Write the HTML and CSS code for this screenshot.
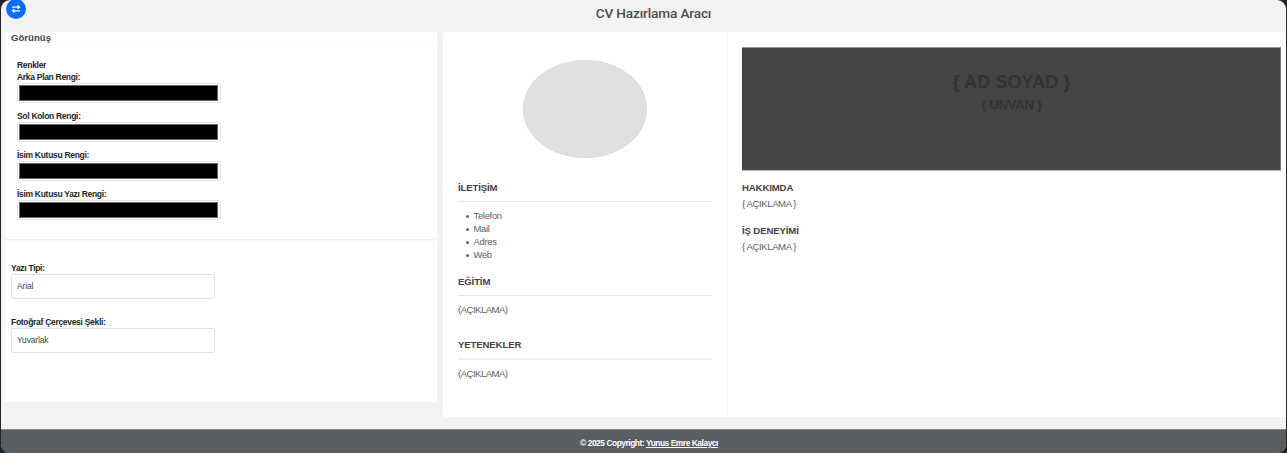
FILE: index.html
```html
<!DOCTYPE html>
<html lang="tr">
<head>
<meta charset="utf-8">
<title>CV Hazırlama Aracı</title>
<link rel="stylesheet" href="styles.css">
</head>
<body>
<div class="app">
  <header class="topbar">
    <h1 class="title">CV Hazırlama Aracı</h1>
    <button class="toggle" aria-label="Paneli değiştir">
      <svg width="10" height="8" viewBox="0 0 10 8" fill="none" stroke="#fff" stroke-width="1.2"><path d="M1 2.2H8.5M6.6 .5L8.5 2.2L6.6 3.9M9 5.8H1.5M3.4 4.1L1.5 5.8L3.4 7.5"/></svg>
    </button>
  </header>
  <main class="workspace">
    <aside class="settings">
      <h2 class="settings-title">Görünüş</h2>
      <section class="colors">
        <div class="label">Renkler</div>
        <div class="color-field"><div class="label">Arka Plan Rengi:</div><div class="swatch"><div class="swatch-fill"></div></div></div>
        <div class="color-field"><div class="label">Sol Kolon Rengi:</div><div class="swatch"><div class="swatch-fill"></div></div></div>
        <div class="color-field"><div class="label">İsim Kutusu Rengi:</div><div class="swatch"><div class="swatch-fill"></div></div></div>
        <div class="color-field"><div class="label">İsim Kutusu Yazı Rengi:</div><div class="swatch"><div class="swatch-fill"></div></div></div>
      </section>
      <section class="options">
        <div class="option"><div class="label">Yazı Tipi:</div><div class="select">Arial</div></div>
        <div class="option"><div class="label">Fotoğraf Çerçevesi Şekli:</div><div class="select">Yuvarlak</div></div>
      </section>
    </aside>
    <article class="cv">
      <div class="cv-side">
        <div class="photo"></div>
        <section class="contact">
          <h3 class="heading ruled">İLETİŞİM</h3>
          <ul class="list"><li>Telefon</li><li>Mail</li><li>Adres</li><li>Web</li></ul>
        </section>
        <section class="education">
          <h3 class="heading ruled">EĞİTİM</h3>
          <p class="text">(AÇIKLAMA)</p>
        </section>
        <section class="skills">
          <h3 class="heading ruled thick">YETENEKLER</h3>
          <p class="text">(AÇIKLAMA)</p>
        </section>
      </div>
      <div class="cv-main">
        <div class="namebox">
          <div class="name">{ AD SOYAD }</div>
          <div class="role">{ UNVAN }</div>
        </div>
        <section class="block">
          <h3 class="heading">HAKKIMDA</h3>
          <p class="text">{ AÇIKLAMA }</p>
        </section>
        <section class="block">
          <h3 class="heading">İŞ DENEYİMİ</h3>
          <p class="text">{ AÇIKLAMA }</p>
        </section>
      </div>
    </article>
  </main>
  <footer class="footer"><span class="copy">© 2025 Copyright: <a class="author">Yunus Emre Kalaycı</a></span></footer>
</div>
</body>
</html>
```
FILE: styles.css
```css
* { box-sizing: border-box; }
body { margin: 0; padding: 0 1px; height: 453px; background: #242326; font-family: "Liberation Sans", Arial, sans-serif; color: #212529; overflow: hidden; }
h1, h2, h3, p, ul { margin: 0; padding: 0; }
.app { height: 453px; display: flex; flex-direction: column; background: #f3f3f3; border-radius: 9px; overflow: hidden; }
.topbar { position: relative; height: 32px; flex: none; padding-left: 20px; text-align: center; }
.title { font: 500 13.6px/26px Roboto, sans-serif; letter-spacing: -.14px; color: #4c4c4c; white-space: nowrap; }
.toggle { position: absolute; left: 5px; top: -1px; width: 20px; height: 20px; padding: 0; border: 0; border-radius: 50%; background: #0d6efd; display: flex; align-items: center; justify-content: center; }
.workspace { height: 397px; flex: none; display: flex; align-items: flex-start; gap: 6px; padding-left: 4px; }
.settings { width: 432px; height: 370px; flex: none; background: #fff; }
.settings-title { height: 15px; padding-left: 6px; font: 700 9.6px/12px "Liberation Sans", Arial, sans-serif; letter-spacing: 0; color: #444; border-bottom: 1px solid #fcfcfc; }
.label { font-size: 8.5px; font-weight: 700; line-height: 12px; letter-spacing: -.3px; white-space: nowrap; }
.colors { height: 193px; padding: 12px 12px 0; border-bottom: 1px solid #eee; border-radius: 0 0 4px 4px; box-shadow: 0 1px 2px #f3f3f3; }
.color-field { height: 39px; }
.swatch { width: 204px; height: 20px; padding: 1px; border: 1px solid #e6e6e6; border-radius: 2px; }
.swatch-fill { height: 16px; margin-right: 1px; background: #000; border: 1px solid #666; }
.options { padding: 22px 6px 0; }
.option { height: 54px; }
.select { width: 204px; height: 25px; padding-left: 5px; border: 1px solid #e2e4e6; border-radius: 2px; font-size: 8.5px; line-height: 23px; letter-spacing: -.15px; color: #444; }
.cv { width: 843px; height: 385px; display: flex; flex: none; background: #fff; border-radius: 3px 0 0 3px; }
.cv-side { width: 285px; padding: 27.5px 15px 0; border-right: 1px solid #f8f8f8; }
.photo { width: 124px; height: 98.5px; margin: 0 auto 22px; background: #e0e0e0; border: 1px solid #dadada; border-radius: 50%; }
.heading { font-size: 9.6px; font-weight: 700; line-height: 15px; letter-spacing: -.13px; color: #444; }
.ruled { height: 22px; border-bottom: 1px solid #e7e7e7; }
.thick { height: 23px; border-bottom: 2px solid #f1f1f1; }
.contact { height: 94px; }
.education { height: 63px; }
.list { margin-top: 7px; padding-left: 15.5px; list-style: none; font-size: 9.4px; line-height: 13px; letter-spacing: -.28px; color: #5e5e5e; }
.list li { position: relative; }
.list li::before { content: ""; position: absolute; left: -8px; top: 6px; width: 3px; height: 3px; border-radius: 50%; background: #666; }
.text { font-size: 9.6px; line-height: 13px; letter-spacing: -.54px; color: #5e5e5e; }
.ruled + .text { margin-top: 7px; }
.cv-main .text { letter-spacing: -.42px; }
.cv-main { flex: 1; padding: 15px 5px 0 14px; }
.namebox { height: 124px; padding: 23px 0 0 1px; margin-bottom: 9px; background: #444; border-top: 1px solid #929292; border-bottom: 1px solid #b9b9b9; border-right: 1px solid #777; text-align: center; font-weight: 700; color: #333; }
.name { font-size: 18px; line-height: 22px; letter-spacing: .1px; }
.role { font-size: 13.3px; line-height: 24px; letter-spacing: -.4px; }
.block { height: 43px; }
.block .text { margin-top: 2px; }
.footer { height: 24px; flex: none; padding-left: 11px; border-top: 1px solid #858a8e; background: #565d63; color: #fff; font-size: 8.4px; font-weight: 700; line-height: 26px; text-align: center; }
.copy { letter-spacing: -.45px; }
.author { text-decoration: underline; }
```
